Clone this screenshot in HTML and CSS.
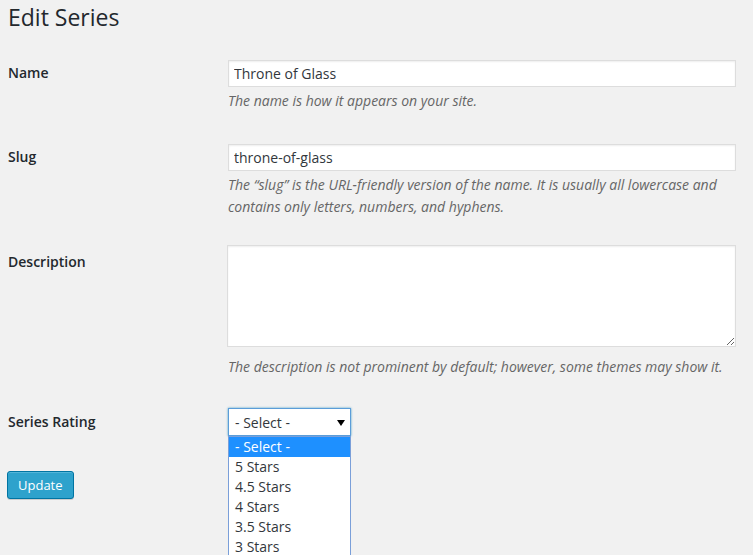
FILE: index.html
```html
<!DOCTYPE html>
<html lang="en">
<head>
<meta charset="utf-8">
<title>Edit Series</title>
<link rel="stylesheet" href="styles.css">
</head>
<body>
<div class="wrap">
  <h1 class="title">Edit Series</h1>
  <form class="form">
    <div class="row">
      <label class="label" for="name">Name</label>
      <div class="field">
        <input class="text" id="name" type="text" value="Throne of Glass">
        <p class="desc">The name is how it appears on your site.</p>
      </div>
    </div>
    <div class="row row--slug">
      <label class="label" for="slug">Slug</label>
      <div class="field">
        <input class="text" id="slug" type="text" value="throne-of-glass">
        <p class="desc">The “slug” is the URL-friendly version of the name. It is usually all lowercase and contains only letters, numbers, and hyphens.</p>
      </div>
    </div>
    <div class="row row--desc">
      <label class="label" for="description">Description</label>
      <div class="field">
        <textarea class="area" id="description"></textarea>
        <p class="desc desc--area">The description is not prominent by default; however, some themes may show it.</p>
      </div>
    </div>
    <div class="row row--rating">
      <label class="label">Series Rating</label>
      <div class="field">
        <div class="select">
          <span class="select-value">- Select -</span>
          <svg class="select-arrow" width="8" height="6" viewBox="0 0 8 6"><path d="M0 0H8L4 6Z" fill="#000"/></svg>
          <ul class="options">
            <li class="option option--active">- Select -</li>
            <li class="option">5 Stars</li>
            <li class="option">4.5 Stars</li>
            <li class="option">4 Stars</li>
            <li class="option">3.5 Stars</li>
            <li class="option">3 Stars</li>
          </ul>
        </div>
      </div>
    </div>
    <div class="submit">
      <button class="button" type="button">Update</button>
    </div>
  </form>
</div>
</body>
</html>
```

FILE: styles.css
```css
html, body {
  margin: 0;
  padding: 0;
  overflow: hidden;
  height: 100%;
}
body {
  background: #f1f1f1;
  color: #23282d;
  font-family: "Open Sans", "Noto Sans", sans-serif;
  font-size: 13px;
}
.wrap {
  padding: 0 7px 0 8px;
}
.title {
  margin: 0 0 13px;
  padding-top: 3px;
  font-size: 23px;
  font-weight: 400;
  line-height: 29px;
  color: #23282d;
}
.form {
  margin: 0;
}
.row {
  display: flex;
  align-items: flex-start;
}
.label {
  flex: 0 0 210px;
  box-sizing: border-box;
  padding: 19px 10px 0 0;
  font-size: 14px;
  font-weight: 600;
  line-height: 18px;
  color: #23282d;
}
.row--desc .label {
  padding-top: 23px;
}
.row--rating .label {
  padding-top: 20px;
}
.field {
  flex: 1;
  min-width: 0;
  padding: 15px 10px 17px 10px;
}
.row--slug .field {
  padding-bottom: 12px;
}
.row--desc .field {
  padding-bottom: 15px;
}
.row--rating .field {
  padding-bottom: 15px;
}
.text {
  display: block;
  box-sizing: border-box;
  width: 100%;
  height: 27px;
  margin: 0;
  padding: 3px 5px;
  border: 1px solid #ddd;
  box-shadow: inset 0 1px 2px rgba(0, 0, 0, 0.07);
  background: #fff;
  font-family: "Open Sans", "Noto Sans", sans-serif;
  font-size: 14px;
  line-height: 19px;
  color: #32373c;
  outline: none;
}
.area {
  display: block;
  box-sizing: border-box;
  width: calc(100% + 1px);
  margin: 0 0 0 -1px;
  height: 102px;
  border: 1px solid #ddd;
  box-shadow: inset 0 1px 2px rgba(0, 0, 0, 0.07);
  background: #fff;
  font-family: "Open Sans", "Noto Sans", sans-serif;
  font-size: 14px;
  outline: none;
}
.desc {
  margin: 3px 0 0;
  font-size: 14px;
  font-style: italic;
  line-height: 22px;
  color: #666;
}
.desc--area {
  margin-top: 9px;
}
.select {
  position: relative;
  box-sizing: border-box;
  width: 123px;
  height: 28px;
  border: 1px solid #5b9dd9;
  box-shadow: 0 0 2px rgba(30, 140, 190, 0.8);
  background: #fff;
  display: flex;
  align-items: center;
  justify-content: space-between;
  padding: 1px 5px 0 6px;
}
.select-value {
  font-size: 14px;
  line-height: 20px;
  color: #32373c;
}
.select-arrow {
  display: block;
}
.options {
  position: absolute;
  top: calc(100% + 1px);
  left: -1px;
  width: 123px;
  box-sizing: border-box;
  margin: 0;
  padding: 0;
  list-style: none;
  background: #fff;
  border: 1px solid #7a9fd9;
}
.option {
  height: 20px;
  padding-left: 6px;
  font-size: 14px;
  line-height: 20px;
  color: #32373c;
}
.option--active {
  background: #1e90ff;
  color: #fff;
}
.submit {
  padding-top: 20px;
}
.button {
  box-sizing: border-box;
  height: 28px;
  margin: 0 0 0 -1px;
  padding: 0 10px 1px;
  border: 1px solid #0074a2;
  border-radius: 3px;
  background: #2ea2cc;
  box-shadow: inset 0 1px 0 rgba(120, 200, 230, 0.5), 0 1px 0 rgba(0, 0, 0, 0.15);
  color: #fff;
  font-family: "Open Sans", "Noto Sans", sans-serif;
  font-size: 13px;
  line-height: 26px;
  cursor: pointer;
}
```
